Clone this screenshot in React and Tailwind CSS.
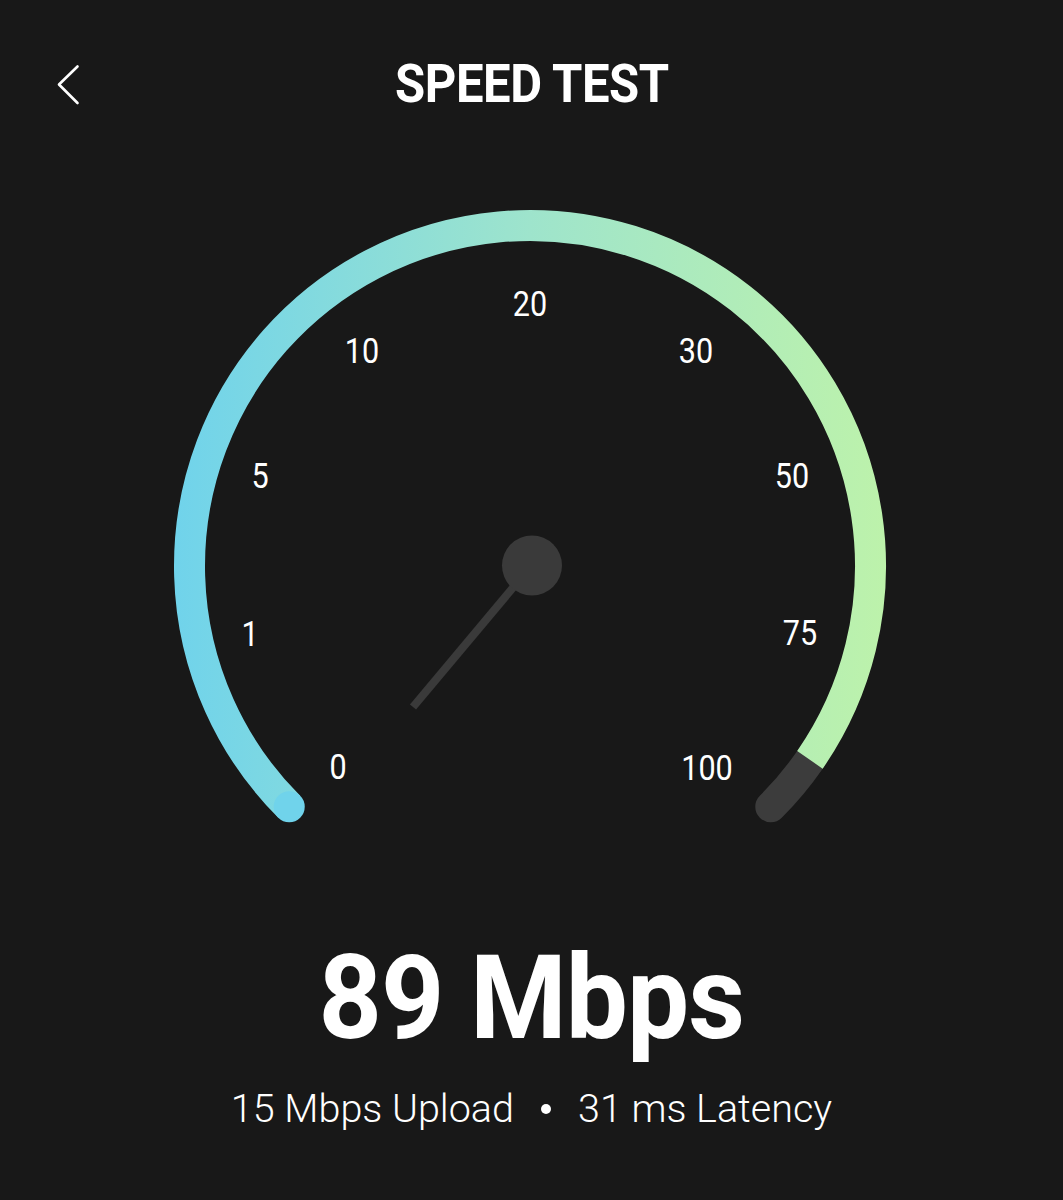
import React from "react";

const labels = [
  { t: "0", x: 338, y: 779 },
  { t: "1", x: 250, y: 646 },
  { t: "5", x: 260, y: 488 },
  { t: "10", x: 362, y: 363 },
  { t: "20", x: 530, y: 316 },
  { t: "30", x: 696, y: 363 },
  { t: "50", x: 792, y: 488 },
  { t: "75", x: 800, y: 645 },
  { t: "100", x: 707, y: 780 },
];

function Gauge() {
  const cx = 530;
  const cy = 566;
  const r = 340.5;
  const pt = (deg) => {
    const a = (deg * Math.PI) / 180;
    return [cx + r * Math.cos(a), cy + r * Math.sin(a)];
  };
  const [sx, sy] = pt(135);
  const [jx, jy] = pt(34.7);
  const [ex, ey] = pt(45);
  return (
    <svg width="1063" height="660" viewBox="0 180 1063 660" className="block">
      <defs>
        <linearGradient id="arcg" gradientUnits="userSpaceOnUse" x1="175" y1="0" x2="885" y2="0">
          <stop offset="0" stopColor="#70d3eb" />
          <stop offset="0.5" stopColor="#9ee4cc" />
          <stop offset="1" stopColor="#bdf2ab" />
        </linearGradient>
      </defs>
      <path
        d={`M ${jx} ${jy} A ${r} ${r} 0 0 1 ${ex} ${ey}`}
        fill="none"
        stroke="#3c3c3c"
        strokeWidth="31"
        strokeLinecap="round"
      />
      <path
        d={`M ${sx} ${sy} A ${r} ${r} 0 1 1 ${jx} ${jy}`}
        fill="none"
        stroke="url(#arcg)"
        strokeWidth="31"
        strokeLinecap="butt"
      />
      <circle cx={sx} cy={sy} r="15.5" fill="#70d3eb" />
      {labels.map((l) => (
        <text
          key={l.t}
          transform={`translate(${l.x} ${l.y}) scale(0.85 1)`}
          textAnchor="middle"
          fill="#ffffff"
          fontFamily="Roboto, 'Noto Sans', sans-serif"
          fontWeight="400"
          fontSize="36"
        >
          {l.t}
        </text>
      ))}
      <line x1="532" y1="565" x2="413" y2="707" stroke="#3a3a3a" strokeWidth="8" />
      <circle cx="532" cy="565.5" r="30" fill="#3a3a3a" />
    </svg>
  );
}

export default function App() {
  return (
    <div
      className="w-full min-h-[1200px] bg-[#181818] text-white flex flex-col items-center"
      style={{ fontFamily: "Roboto, 'Noto Sans', sans-serif" }}
    >
      <div className="relative w-full h-[180px] flex justify-center pt-[58px]">
        <button className="absolute left-[55px] top-[62px] w-[28px] h-[46px] flex items-center justify-center">
          <svg width="28" height="46" viewBox="0 0 28 46">
            <polyline
              points="22.5,4.5 4,22.5 22.5,41"
              fill="none"
              stroke="#ffffff"
              strokeWidth="2.6"
              strokeLinecap="round"
              strokeLinejoin="round"
            />
          </svg>
        </button>
        <h1 className="text-[53px] leading-none font-bold tracking-[-0.5px] scale-x-[0.925]">SPEED TEST</h1>
      </div>
      <Gauge />
      <div className="mt-[100px] text-[117px] leading-none font-bold scale-x-[0.945] tracking-[-1px]">89 Mbps</div>
      <div className="mt-[32px] flex items-center gap-[27px] text-[39.5px] leading-none font-light">
        <span>15 Mbps Upload</span>
        <span className="w-[10px] h-[10px] rounded-full bg-white"></span>
        <span>31 ms Latency</span>
      </div>
    </div>
  );
}
